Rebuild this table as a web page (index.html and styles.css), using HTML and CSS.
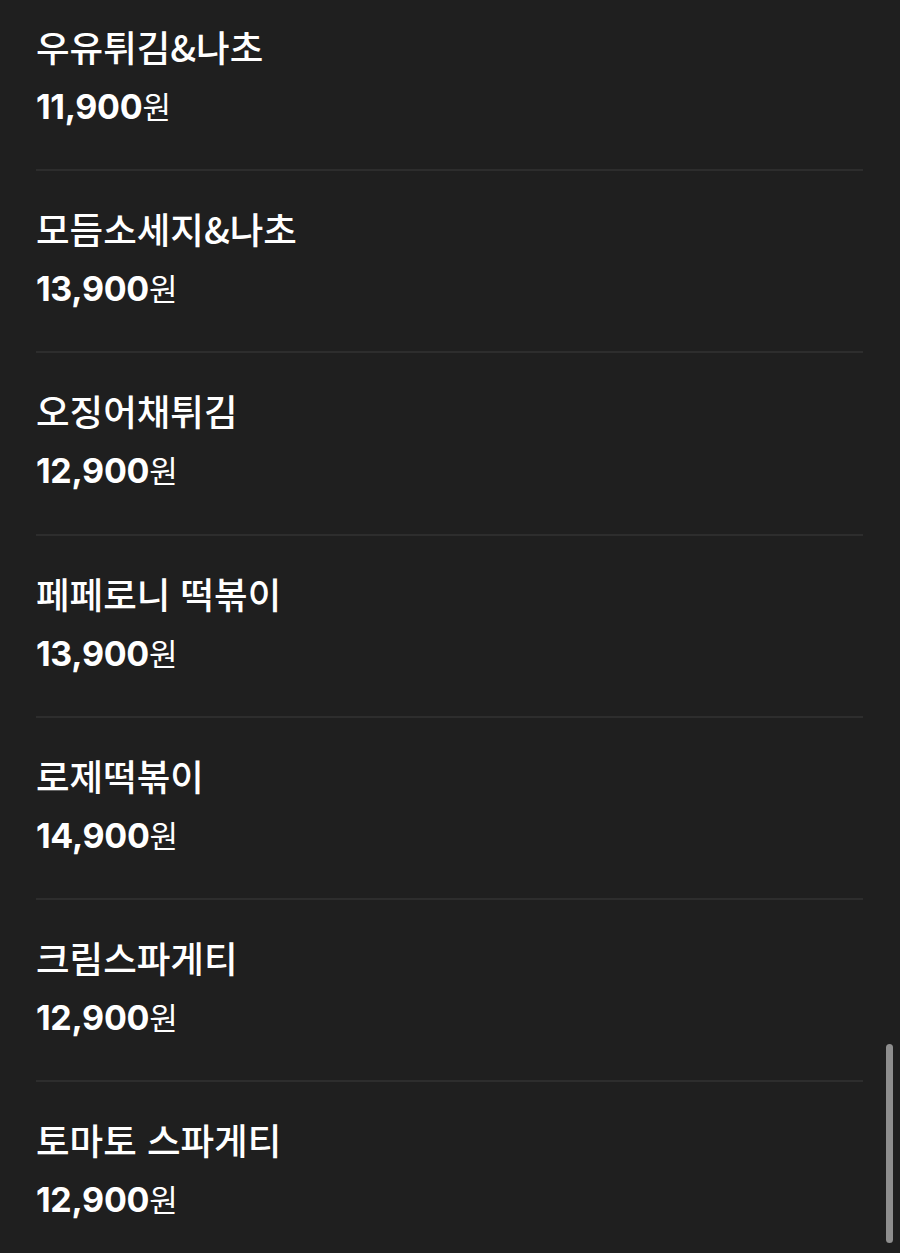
FILE: index.html
```html
<!DOCTYPE html>
<html lang="ko">
<head>
<meta charset="utf-8">
<title>메뉴</title>
<link rel="stylesheet" href="styles.css">
</head>
<body>
<ul class="menu">
  <li class="item"><div class="name">우유튀김&amp;나초</div><div class="price">11,900<span class="won">원</span></div></li>
  <li class="item"><div class="name">모듬소세지&amp;나초</div><div class="price">13,900<span class="won">원</span></div></li>
  <li class="item"><div class="name">오징어채튀김</div><div class="price">12,900<span class="won">원</span></div></li>
  <li class="item"><div class="name">페페로니 떡볶이</div><div class="price">13,900<span class="won">원</span></div></li>
  <li class="item"><div class="name">로제떡볶이</div><div class="price">14,900<span class="won">원</span></div></li>
  <li class="item"><div class="name">크림스파게티</div><div class="price">12,900<span class="won">원</span></div></li>
  <li class="item last"><div class="name">토마토 스파게티</div><div class="price">12,900<span class="won">원</span></div></li>
</ul>
<div class="scrollbar"></div>
</body>
</html>
```
FILE: styles.css
```css
html, body {
  margin: 0;
  padding: 0;
  background: #1f1f1f;
  height: 100%;
  overflow: hidden;
}
body {
  font-family: "Noto Sans CJK KR", "Noto Sans", sans-serif;
  color: #ffffff;
}
.menu {
  list-style: none;
  margin: -11px 37px 0 36px;
  padding: 0;
}
.item {
  box-sizing: border-box;
  height: 182.2px;
  padding-top: 36px;
  border-bottom: 2px solid #2d2d2d;
}
.item.last {
  border-bottom: none;
}
.name {
  font-size: 36.5px;
  line-height: 44px;
  letter-spacing: 0;
  font-weight: 500;
}
.price {
  margin-top: 17px;
  font-family: Inter, "Liberation Sans", "Noto Sans CJK KR", sans-serif;
  font-weight: 700;
  font-size: 34px;
  line-height: 40px;
  letter-spacing: -0.3px;
}
.won {
  font-family: "Noto Sans CJK KR", sans-serif;
  font-weight: 400;
  font-size: 31px;
  letter-spacing: 0;
}
.scrollbar {
  position: absolute;
  left: 886px;
  top: 1044px;
  width: 7px;
  height: 199px;
  border-radius: 4px;
  background: #8e8e8e;
}
```
